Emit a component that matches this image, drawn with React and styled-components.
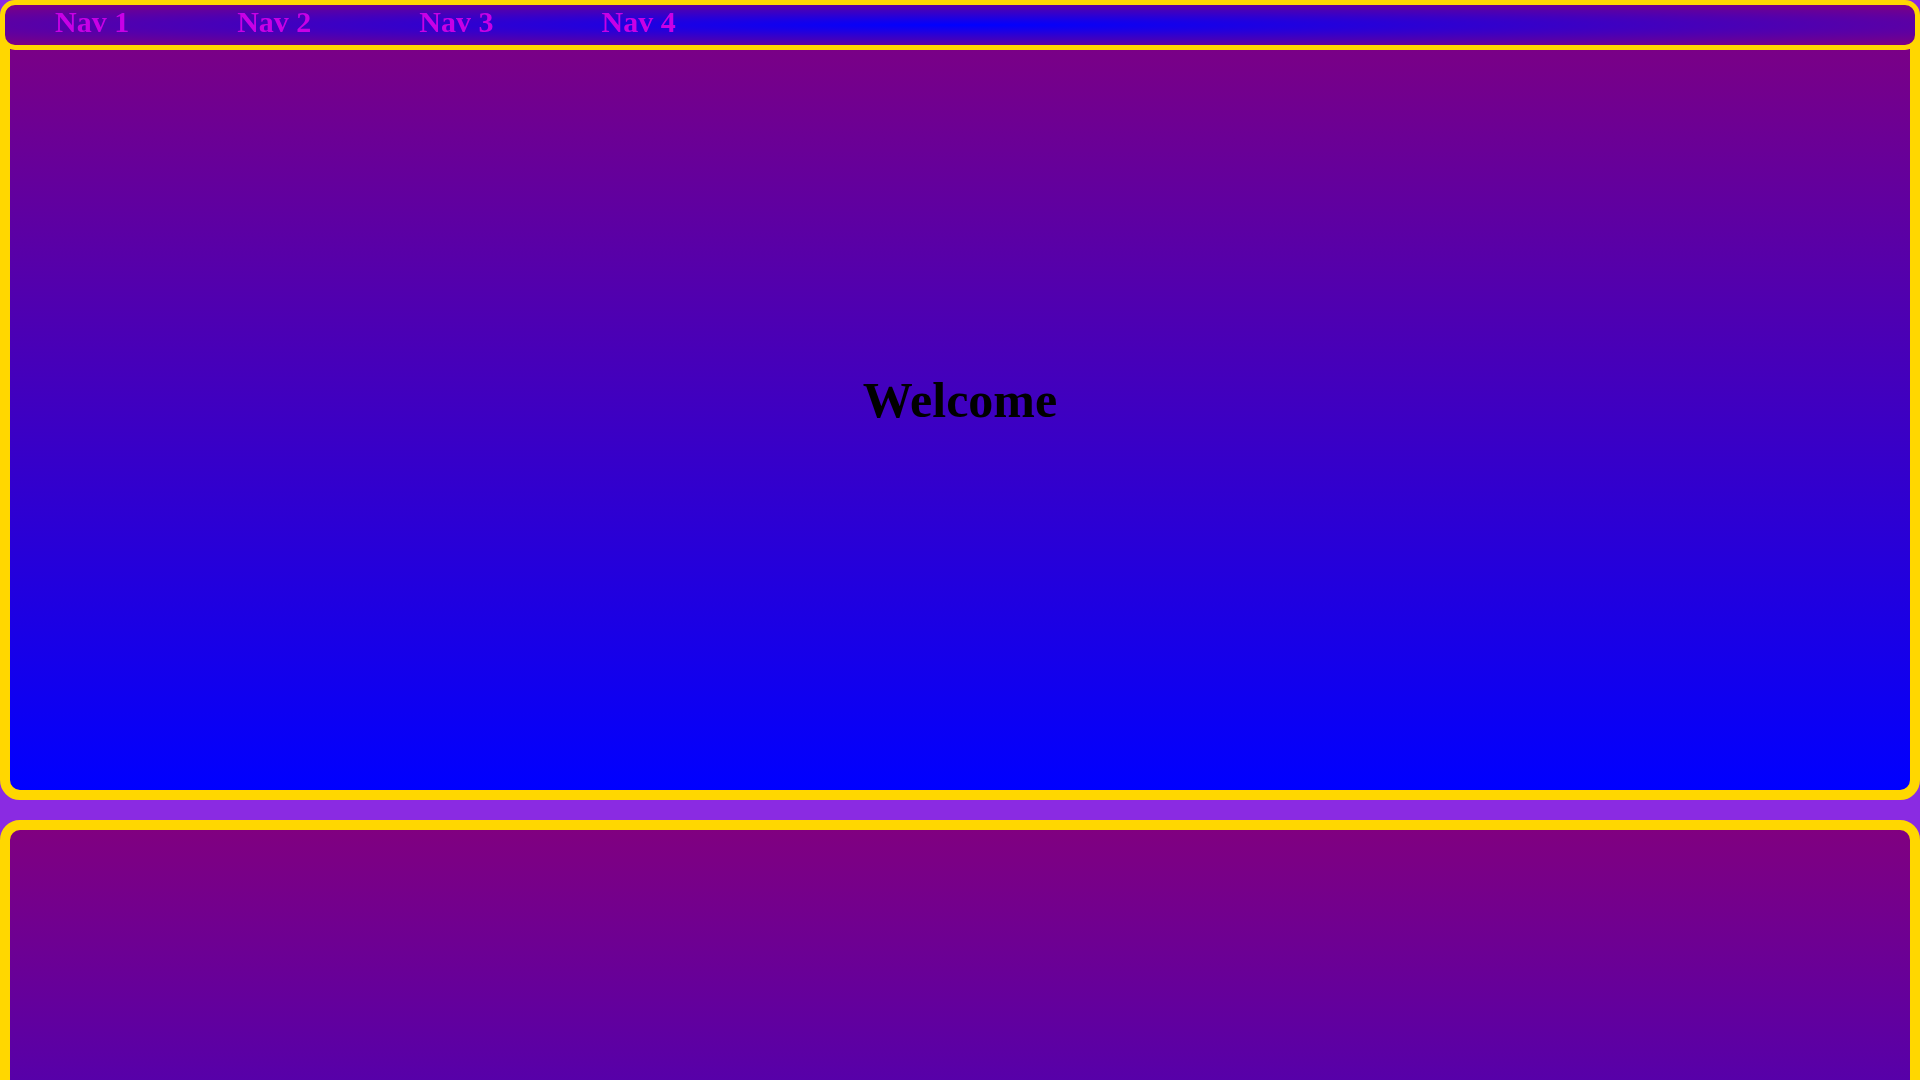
import React from "react";
import styled, { createGlobalStyle } from "styled-components";

const GlobalStyle = createGlobalStyle`
	html,
	body {
		margin: 0;
		padding: 0;
	}
	body {
		background-color: blueviolet;
		font-family: "Liberation Serif", "Times New Roman", serif;
	}
`;

const navItems = ["Nav 1", "Nav 2", "Nav 3", "Nav 4"];

function App() {
	return (
		<>
			<GlobalStyle />
			<NavBar>
				<NavList>
					{navItems.map((item) => (
						<NavItem key={item}>
							<NavLink href="#">{item}</NavLink>
						</NavItem>
					))}
				</NavList>
			</NavBar>
			<Main>
				<Section>
					<Title>Welcome</Title>
				</Section>
				<Section />
			</Main>
		</>
	);
}

const NavBar = styled.nav`
	position: fixed;
	top: 0;
	left: 0;
	right: 0;
	z-index: 10;
	box-sizing: border-box;
	height: 50px;
	border: 5px solid gold;
	border-radius: 15px;
	background: radial-gradient(ellipse at center, blue, purple);
`;

const NavList = styled.ul`
	display: flex;
	align-items: flex-start;
	gap: 108px;
	margin: 0;
	padding: 0 0 0 50px;
	list-style: none;
`;

const NavItem = styled.li`
	margin: 0;
`;

const NavLink = styled.a`
	display: block;
	font-family: "Liberation Serif", "Times New Roman", serif;
	font-weight: bold;
	font-size: 30px;
	line-height: 33px;
	color: #c800e6;
	text-decoration: none;
`;

const Main = styled.main`
	display: flex;
	flex-direction: column;
	gap: 20px;
`;

const Section = styled.section`
	box-sizing: border-box;
	height: 800px;
	display: flex;
	align-items: center;
	justify-content: center;
	border: 10px solid gold;
	border-radius: 20px;
	background: linear-gradient(to bottom, purple, blue);
`;

const Title = styled.h1`
	margin: 0;
	font-family: "Liberation Serif", "Times New Roman", serif;
	font-weight: bold;
	font-size: 50px;
	color: #000000;
`;

export default App;
